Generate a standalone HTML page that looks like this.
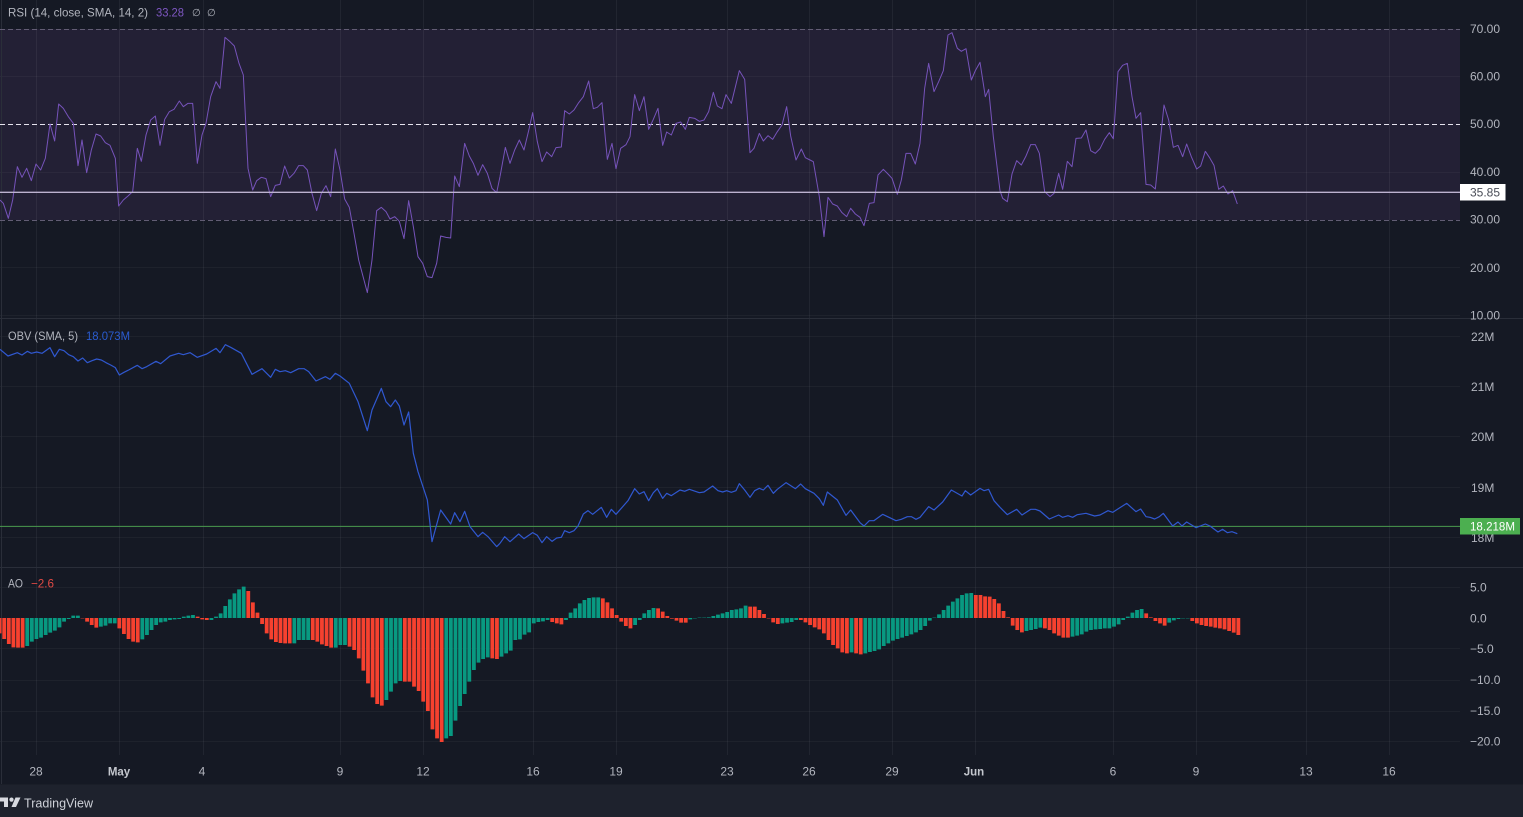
<!DOCTYPE html>
<html>
<head>
<meta charset="utf-8">
<title>TradingView chart</title>
<style>
html,body{margin:0;padding:0;background:#151924;width:1523px;height:817px;overflow:hidden}
svg{display:block}
text{font-family:"Liberation Sans",sans-serif;font-size:12px;fill:#b2b5be}
.lg{font-size:12px}
.t{text-anchor:middle}
</style>
</head>
<body>
<svg width="1523" height="817" viewBox="0 0 1523 817" xmlns="http://www.w3.org/2000/svg">

<rect width="1523" height="817" fill="#151924"/>

<!-- RSI band -->
<rect x="0" y="29" width="1460" height="191" fill="#232035"/>

<!-- grid -->
<path stroke="#ffffff" stroke-opacity=".055" stroke-width="1" fill="none" d="M36.5 0V755M119.5 0V755M203.5 0V755M340.5 0V755M423.5 0V755M533.5 0V755M616.5 0V755M727.5 0V755M809.5 0V755M892.5 0V755M975.5 0V755M1113.5 0V755M1196.5 0V755M1306.5 0V755M1389.5 0V755"/>
<path stroke="#ffffff" stroke-opacity=".04" stroke-width="1" fill="none" d="M0 76.5H1460M0 172.5H1460M0 267.5H1460M0 315.5H1460M0 336.5H1460M0 386.5H1460M0 436.5H1460M0 487.5H1460M0 537.5H1460M0 587.5H1460M0 648.5H1460M0 680.5H1460M0 711.5H1460M0 741.5H1460"/>

<!-- separators -->
<path stroke="#2a2e39" stroke-width="1" fill="none" d="M0 318.5H1523M0 567.5H1523M1.5 0V784"/>

<!-- RSI reference lines -->
<path stroke="#625d74" stroke-width="1" stroke-dasharray="5 3" fill="none" d="M0 29.5H1460M0 220.5H1460"/>
<path stroke="#e6e3ee" stroke-width="1" stroke-dasharray="5 3" fill="none" d="M0 124.5H1460"/>

<!-- RSI line -->
<g fill="none" stroke="#7653ba" stroke-width="3" stroke-linejoin="round">
<polyline transform="scale(.33333)" points="0,600 10,610 25,655 38,600 52,500 66,532 80,505 94,542 108,492 122,510 136,475 150,372 164,423 176,312 190,325 205,350 220,370 234,497 246,420 260,518 274,450 288,402 302,408 316,428 330,436 346,475 356,618 370,600 384,588 398,575 412,445 424,484 438,405 452,360 466,348 480,436 494,358 508,335 522,328 538,303 550,320 564,310 578,310 592,490 606,405 618,370 632,290 648,245 660,265 675,112 690,125 703,138 717,190 730,225 744,505 758,570 770,542 784,532 798,536 812,590 826,556 840,553 854,498 868,534 882,520 896,497 910,497 922,510 936,580 950,632 964,580 978,557 992,590 1006,447 1020,510 1034,597 1048,622 1062,700 1076,780 1102,878 1116,780 1130,632 1144,622 1158,635 1170,657 1184,650 1198,664 1212,716 1226,602 1240,680 1254,770 1268,790 1282,830 1296,833 1310,790 1322,708 1338,712 1352,714 1364,528 1378,560 1394,430 1408,468 1420,490 1434,526 1448,494 1462,520 1476,565 1490,578 1500,530"/>
<polyline transform="translate(500,0) scale(.33333)" points="0,530 16,442 30,490 44,450 58,420 72,450 86,392 98,338 112,425 126,485 140,456 155,470 168,443 184,441 194,332 208,342 222,330 236,308 250,290 266,243 280,326 292,322 306,308 322,478 336,430 348,506 362,445 378,434 390,410 404,284 418,332 432,290 446,388 460,358 474,325 488,436 500,396 514,405 528,370 542,366 556,388 568,352 584,355 598,364 612,360 626,335 640,277 652,318 666,326 678,284 694,310 718,212 734,238 750,458 762,445 778,400 790,423 804,407 818,418 832,395 846,375 860,320 872,408 888,480 904,447 916,473 930,480 940,485 958,590 972,710 984,592 998,612 1012,618 1026,638 1040,650 1052,625 1066,642 1080,652 1092,677 1108,610 1122,608 1134,525 1150,508 1164,522 1176,535 1192,583 1204,540 1218,460 1232,460 1246,492 1260,430 1274,265 1286,190 1302,275 1316,245 1330,212 1344,105 1356,98 1372,145 1384,154 1398,146 1414,240 1426,212 1440,187 1456,290 1466,268 1480,410 1500,572"/>
<polyline transform="translate(1000,0) scale(.33333)" points="0,572 8,595 22,605 36,522 50,482 64,495 78,468 92,434 106,434 118,460 134,575 150,590 162,580 176,520 188,568 202,484 216,500 228,415 244,414 258,390 272,452 286,460 300,446 314,418 328,398 340,416 354,215 368,196 382,190 396,290 408,355 422,338 438,553 452,555 466,567 478,450 492,315 506,360 520,442 534,436 548,470 560,432 574,470 590,507 602,498 616,454 630,475 642,496 656,568 670,558 684,582 698,572 712,612"/>
</g>

<!-- RSI horizontal -->
<path stroke="#bcb2cf" stroke-width="1.4" fill="none" d="M0 192.3H1460"/>

<!-- OBV green horizontal -->
<path stroke="#4a9a4e" stroke-width="1" fill="none" d="M0 526.4H1460"/>

<!-- OBV line -->
<g fill="none" stroke="#3058d0" stroke-width="3.6" stroke-linejoin="round">
<polyline transform="translate(0,320) scale(.33333)" points="0,88 24,108 52,98 66,105 82,94 94,100 110,96 126,100 150,83 164,110 178,88 192,92 206,104 220,110 234,123 248,114 262,128 276,122 290,117 304,120 318,128 332,135 346,143 358,165 372,157 386,150 412,136 426,146 440,140 468,124 482,131 510,108 536,100 550,104 570,98 592,112 620,102 648,85 660,98 676,74 692,82 724,100 756,163 786,146 812,172 826,148 840,155 856,152 872,158 896,146 912,146 926,155 948,183 976,170 990,178 1006,160 1020,168 1048,190 1074,245 1102,332 1116,270 1144,205 1158,245 1172,260 1186,240 1198,258 1212,315 1226,276 1240,400 1254,455 1282,540 1296,665 1322,570 1352,612 1364,578 1380,605 1394,574 1410,620 1434,650 1448,637 1464,650 1490,680 1500,670"/>
<polyline transform="translate(500,460) scale(.33333)" points="0,250 14,230 30,245 56,222 72,236 98,218 112,226 126,248 140,230 156,244 170,234 184,232 194,212 208,218 222,212 234,198 250,162 264,152 278,163 304,142 320,172 334,148 348,163 384,122 404,86 418,102 432,95 446,122 460,98 472,86 488,115 500,100 514,107 540,90 554,94 568,88 598,98 612,96 638,78 654,92 668,96 680,92 694,97 708,92 718,71 734,90 750,112 764,92 778,85 790,90 804,76 820,100 832,88 858,68 886,86 902,72 916,86 942,100 958,116 970,136 982,96 1012,120 1038,166 1052,150 1080,188 1092,198 1108,182 1122,182 1148,163 1188,182 1204,178 1222,170 1234,170 1248,178 1260,172 1286,140 1302,150 1328,126 1354,90 1386,108 1396,92 1412,105 1440,85 1452,92 1466,88 1482,122 1500,142"/>
<polyline transform="translate(1000,460) scale(.33333)" points="0,142 22,164 50,148 66,165 92,148 106,148 120,153 148,177 176,165 188,172 204,167 218,172 232,164 258,160 284,168 300,165 324,152 338,157 380,130 408,155 422,147 438,170 450,172 464,177 478,170 490,160 518,198 534,186 546,198 560,186 588,203 616,192 630,198 654,216 668,208 682,218 696,215 712,221"/>
</g>

<!-- AO histogram -->
<g transform="translate(0,618) scale(.33333)" fill="none" stroke-width="11.4">
<path stroke="#f6412f" d="M-1.2 0v46m13.815-46v63m13.815-63v78m13.815-78v88m13.815-88v89m13.815-89v89
M247.5 0v1m13.815-1v11m13.815-11v21m13.815-21v29
M358 0v31m13.815-31v48m13.815-48v63m13.815-63v71m13.815-71v73
M592.8 0v-4m13.815 4v4m13.815-4v6
M744.8 0v-81m13.815 81v-47m13.815 47v-16m13.815 16v18m13.815-18v46m13.815-46v64m13.815-64v72m13.815-72v75m13.815-75v76m13.815-76v76
M938.2 0v66m13.815-66v71m13.815-71v79m13.815-79v84m13.815-84v89
M1048.7 0v86m13.815-86v96m13.815-96v121m13.815-121v158m13.815-158v196m13.815-196v238m13.815-238v258m13.815-258v263
M1214.5 0v191m13.815-191v191m13.815-191v206m13.815-206v219m13.815-219v251m13.815-251v279m13.815-279v334m13.815-334v361m13.815-361v372
M1477 0v121m13.815-121v123
M1656.6 0v12m13.815-12v16m13.815-16v19
M1808.5 0v-59m13.815 59v-47m13.815 47v-29m13.815 29v-9m13.815 9v11m13.815-11v24m13.815-24v31
M1974.3 0v-29m13.815 29v-19m13.815 19v-6m13.815 6v2m13.815-2v8m13.815-8v14m13.815-14v14
M2250.6 0v-34m13.815 34v-34m13.815 34v-24m13.815 24v-12m13.815 12v1m13.815-1v13m13.815-13v18
M2402.6 0v6m13.815-6v13m13.815-13v21m13.815-21v28m13.815-28v34m13.815-34v46m13.815-46v66m13.815-66v81m13.815-81v91m13.815-91v103m13.815-103v106
M2568.4 0v106m13.815-106v109
M2927.6 0v-69m13.815 69v-69m13.815 69v-65m13.815 65v-64m13.815 64v-57m13.815 57v-44m13.815 44v-21m13.815 21v-2m13.815 2v23m13.815-23v36m13.815-36v43
M3134.8 0v31m13.815-31v36m13.815-36v46m13.815-46v53m13.815-53v59m13.815-59v59
M3438.7 0v-14m13.815 14v-2m13.815 2v9m13.815-9v16m13.815-16v23
M3576.9 0v9m13.815-9v16m13.815-16v21m13.815-21v24m13.815-24v26m13.815-26v29m13.815-29v31m13.815-31v34m13.815-34v39m13.815-39v44m13.815-44v51"/>
<path stroke="#089981" d="M81.7 0v84m13.815-84v71m13.815-71v63m13.815-63v59m13.815-59v51m13.815-51v44m13.815-44v38m13.815-38v28m13.815-28v11m13.815-11v3m13.815-3v-7m13.815 7v-7
M302.7 0v26m13.815-26v23m13.815-23v16m13.815-16v16
M427 0v64m13.815-64v51m13.815-51v36m13.815-36v21m13.815-21v13m13.815-13v11m13.815-11v6m13.815-6v4m13.815-4v3m13.815-3v-4m13.815 4v-7m13.815 7v-9
M634.3 0v6m13.815-6v-4m13.815 4v-14m13.815 14v-36m13.815 36v-56m13.815 56v-74m13.815 74v-86m13.815 86v-94
M883 0v76m13.815-76v66m13.815-66v66m13.815-66v66
M1007.3 0v89m13.815-89v81m13.815-81v81
M1159.2 0v246m13.815-246v221m13.815-221v196m13.815-196v189
M1338.8 0v361m13.815-361v354m13.815-354v308m13.815-308v264m13.815-264v228m13.815-228v191m13.815-191v156m13.815-156v134m13.815-134v123m13.815-123v118
M1504.6 0v116m13.815-116v106m13.815-106v98m13.815-98v66m13.815-66v64m13.815-64v50m13.815-50v43m13.815-43v16m13.815-16v12m13.815-12v10m13.815-10v6
M1698 0v6m13.815-6v-16m13.815 16v-29m13.815 29v-44m13.815 44v-54m13.815 54v-60m13.815 60v-62m13.815 62v-62
M1905.3 0v21m13.815-21v6m13.815-6v-14m13.815 14v-24m13.815 24v-30
M2071 0v4m13.815-4v1m13.815-1v-1m13.815 1v-1m13.815 1v-2m13.815 2v-6m13.815 6v-10m13.815 10v-14m13.815 14v-18m13.815 18v-24m13.815 24v-26m13.815 26v-29m13.815 29v-37
M2347.3 0v16m13.815-16v14m13.815-14v12m13.815-12v6
M2554.6 0v103
M2596 0v106m13.815-106v102m13.815-102v99m13.815-99v94m13.815-94v84m13.815-84v76m13.815-76v68m13.815-68v63m13.815-63v59m13.815-59v54m13.815-54v49m13.815-49v43m13.815-43v36m13.815-36v24m13.815-24v8m13.815-8v-1m13.815 1v-11m13.815 11v-24m13.815 24v-37m13.815 37v-49m13.815 49v-59m13.815 59v-69m13.815 69v-74m13.815 74v-75
M3079.5 0v39m13.815-39v36m13.815-36v33m13.815-33v29
M3217.7 0v56m13.815-56v53m13.815-53v49m13.815-49v41m13.815-41v36m13.815-36v34m13.815-34v33m13.815-33v31m13.815-31v31m13.815-31v26m13.815-26v19m13.815-19v6m13.815-6v-4m13.815 4v-16m13.815 16v-24m13.815 24v-27
M3507.8 0v14m13.815-14v7m13.815-7v3m13.815-3v1m13.815-1v1"/>
</g>

<!-- legends -->
<text class="lg" x="8" y="16.5" textLength="140" lengthAdjust="spacingAndGlyphs">RSI (14, close, SMA, 14, 2)</text>
<text class="lg" x="156" y="16.5" textLength="28" lengthAdjust="spacingAndGlyphs" style="fill:#7e57c2">33.28</text>
<text x="192" y="16" style="font-size:10px">∅</text>
<text x="207" y="16" style="font-size:10px">∅</text>
<text class="lg" x="8" y="340" textLength="70" lengthAdjust="spacingAndGlyphs">OBV (SMA, 5)</text>
<text class="lg" x="86" y="340" textLength="44" lengthAdjust="spacingAndGlyphs" style="fill:#2a5bd0">18.073M</text>
<text class="lg" x="8" y="587.5" textLength="15" lengthAdjust="spacingAndGlyphs">AO</text>
<text class="lg" x="31" y="587.5" textLength="23" lengthAdjust="spacingAndGlyphs" style="fill:#e04a45">−2.6</text>

<!-- price scale -->
<text x="1470" y="33">70.00</text>
<text x="1470" y="80.5">60.00</text>
<text x="1470" y="128">50.00</text>
<text x="1470" y="176">40.00</text>
<text x="1470" y="223.5">30.00</text>
<text x="1470" y="272">20.00</text>
<text x="1470" y="319.5">10.00</text>

<rect x="1460" y="184" width="45.5" height="16.5" fill="#ffffff"/>
<text x="1470" y="196.5" style="fill:#4a4d57">35.85</text>

<text x="1471" y="341">22M</text>
<text x="1471" y="391">21M</text>
<text x="1471" y="441">20M</text>
<text x="1471" y="492">19M</text>
<text x="1471" y="542">18M</text>
<rect x="1460" y="518" width="60" height="16.5" fill="#4caf50"/>
<text x="1470" y="530.5" textLength="45" lengthAdjust="spacingAndGlyphs" style="fill:#ffffff">18.218M</text>

<text x="1470" y="591.5">5.0</text>
<text x="1470" y="622.5">0.0</text>
<text x="1470" y="653">−5.0</text>
<text x="1470" y="684">−10.0</text>
<text x="1470" y="715">−15.0</text>
<text x="1470" y="745.5">−20.0</text>

<!-- time axis -->
<text class="t" x="36" y="775.5">28</text>
<text class="t" x="119" y="775.5" style="font-weight:700;font-size:11.5px;fill:#c4c7ce">May</text>
<text class="t" x="202" y="775.5">4</text>
<text class="t" x="340" y="775.5">9</text>
<text class="t" x="423" y="775.5">12</text>
<text class="t" x="533" y="775.5">16</text>
<text class="t" x="616" y="775.5">19</text>
<text class="t" x="727" y="775.5">23</text>
<text class="t" x="809" y="775.5">26</text>
<text class="t" x="892" y="775.5">29</text>
<text class="t" x="974" y="775.5" style="font-weight:700;font-size:11.5px;fill:#c4c7ce">Jun</text>
<text class="t" x="1113" y="775.5">6</text>
<text class="t" x="1196" y="775.5">9</text>
<text class="t" x="1306" y="775.5">13</text>
<text class="t" x="1389" y="775.5">16</text>

<!-- footer -->
<rect x="0" y="784.5" width="1523" height="33" fill="#1e222d"/>
<path fill="#d8dae0" d="M0 797.5H8V807H4V801.5H0z"/>
<circle cx="11.5" cy="799.6" r="2.1" fill="#d8dae0"/>
<path fill="#d8dae0" d="M15.5 797.5H20.5L16 807H11.5z"/>
<text x="24" y="807.5" textLength="69" lengthAdjust="spacingAndGlyphs" style="font-size:13px;fill:#cfd2d9">TradingView</text>
</svg>
</body>
</html>
